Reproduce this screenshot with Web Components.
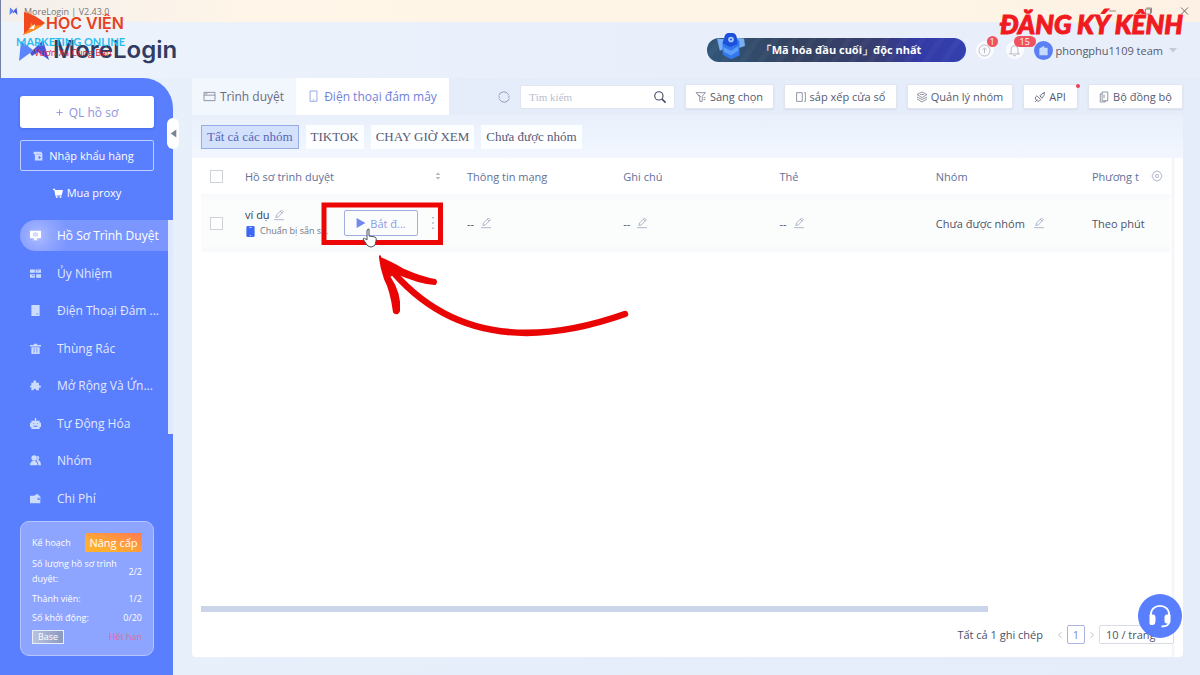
<!DOCTYPE html>
<html lang="vi">
<head>
<meta charset="utf-8">
<title>MoreLogin</title>
<style>
html, body { margin: 0; }
body { font-family: "Open Sans", "Noto Sans", sans-serif; font-size: 11px; color: #4a5068; background: #e7eefb; }
</style>
</head>
<body>
<ml-app></ml-app>
<script>
const define = (name, html, setup) => {
  const tpl = document.createElement('template');
  tpl.innerHTML = html;
  customElements.define(name, class extends HTMLElement {
    constructor() {
      super();
      this.attachShadow({ mode: 'open' }).append(tpl.content.cloneNode(true));
    }
    connectedCallback() { if (setup) setup(this, this.shadowRoot); }
  });
};

const icons = {
  mark: '<path d="M0 16 1 1l7 6-1 3z" fill="#5b86fb" stroke="none"/><path d="M7 10 14 1l2 15-6-6-3 3z" fill="#4a55d8" stroke="none"/>',
  plus: '<path d="M8 1v14M1 8h14" stroke-width="2"/>',
  box: '<path d="M1 1h12l2 3v11H3V5H1z" fill="#cfdcff" stroke="none"/><path d="M5 5h8" stroke="#7f9aff"/><path d="m9 8 4 2-4 3z" fill="#4a6cf0" stroke="none"/>',
  cart: '<path d="M0 1h3l1 2h12l-2 8H6v1h8v1H4L2 3H0z" fill="currentColor" stroke="none"/><circle cx="6" cy="14.500" r="1.500" fill="currentColor" stroke="none"/><circle cx="12" cy="14.500" r="1.500" fill="currentColor" stroke="none"/>',
  monitor: '<path d="M0 1h16v11h-6v2h2v1H4v-1h2v-2H0z" fill="#fff" stroke="none"/><path d="M5 4v5M7 4h2v5H7zM11 4v5" stroke="#a9bbff"/>',
  server: '<path d="M0 2h7v5H0zM8 2h8v5H8zM0 9h7v5H0zM9 9h7v5H9z" fill="currentColor" stroke="none"/><path d="M10 4h3M3 11h3" stroke="#597efe"/>',
  phone: '<path d="M2 0h12v16H2z" fill="currentColor" stroke="none"/><path d="M9 13h3" stroke="#597efe"/>',
  trash: '<path d="M0 3h5l1-2h4l1 2h5v2H0zM2 6h12v10H2z" fill="currentColor" stroke="none"/><path d="M6 7v7M10 7v7" stroke="#597efe"/>',
  puzzle: '<path d="M2 4h3c-1-5 5-5 4 0h4v4c4-1 4 4 0 3v4H9c0-3-4-3-4 0H2v-4C-1 11-1 7 2 8z" fill="currentColor" stroke="none"/>',
  robot: '<path d="M7 0h2v4h5v3h2v6h-2v3H2v-3H0V7h2V4h5z" fill="currentColor" stroke="none"/><path d="M5 8h1M10 8h1M5 12h6" stroke="#597efe" stroke-width="1.500"/>',
  users: '<circle cx="6" cy="4.500" r="4" fill="currentColor" stroke="none"/><path d="M0 15c0-9 11-9 11 0zM10 1c5 0 4 6 1 6 3 1 5 3 5 8h-4c0-4-1-6-3-7 2-2 2-4 1-7z" fill="currentColor" stroke="none"/>',
  wallet: '<path d="M0 4h6l5-3 2 3h2v3h-4v3h4v5H0z" fill="currentColor" stroke="none"/><path d="M12 8h4v1h-4z" fill="currentColor" stroke="none"/>',
  browser: '<path d="M0 2h16v12H0zM0 6h16M2 4h3"/>',
  tablet: '<path d="M3 0h10v15H3zM7 13h2"/>',
  refresh: '<path d="M1 6a7 7 0 0 1 13-1M15 10A7 7 0 0 1 2 11M14.500 6v3M1.500 7v3"/>',
  search: '<circle cx="6.500" cy="6.500" r="5.500" stroke-width="1.500"/><path d="m10.500 10.500 5 5" stroke-width="2"/>',
  filter: '<path d="M0 1h15l-5 6v8H6V8zM12 9h3M12 12h3M4 4l4 4"/>',
  panes: '<path d="M1 1h9v14H1zM13 1h2v14h-2"/>',
  layers: '<path d="m8 0 8 4-8 5-8-5zM0 8l8 4 8-4M0 11l8 5 8-5M5 4h6"/>',
  api: '<path d="M0 16l4-4m-1-6 6 6c-2 4-5 3-7 1s-2-5 1-7zm5 0 3-3c3-2 6-1 3 3l-3 4zm4-3 4-3M8 8l2-2" stroke-width="1.300"/>',
  copy: '<path d="M5 0h9v14H5zM5 3H2v13h8v-2M8 4v6"/>',
  pencil: '<path d="m3 12 1-4 8-8 3 3-8 8zM0 15.500h16M10 2l3 3"/>',
  device: '<rect x="2" width="12" height="16" rx="2" fill="#3f67f5" stroke="none"/><path d="M6 2h4M7 14h2" stroke="#fff"/>',
  play: '<path d="m1 0 14 8-14 8z" fill="#7288ee" stroke="none"/>',
  dots: '<g fill="#8088a8" stroke="none"><circle cx="8" cy="1" r="1"/><circle cx="8" cy="8" r="1"/><circle cx="8" cy="15" r="1"/></g>',
  sort: '<path d="m3 6 5-5 5 5zM3 10l5 5 5-5z" fill="#b4b8c6" stroke="none"/>',
  gear: '<path d="M8 0 13 2l3 6-3 6-5 2-5-2-3-6 3-6z"/><circle cx="8" cy="8" r="2.500"/>',
  up: '<circle cx="8" cy="8" r="8"/><path d="M8 12V5M5 7l3-3 3 3"/>',
  bell: '<path d="M0 13h16M3 13V7c0-8 10-8 10 0v6M6 15.500h4"/>',
  building: '<path d="m2 5 7-4v14H2zM9 4h5v11H9z" fill="#c6dcff" stroke="none"/>',
  caret: '<path d="M0 4h16l-8 9z" fill="#c3cad9" stroke="none"/>',
  fold: '<path d="M13 1v14L3 8z" fill="#7b8496" stroke="none"/>',
  left: '<path d="m12 1-8 7 8 7" stroke-width="2"/>', right: '<path d="m4 1 8 7-8 7" stroke-width="2"/>',
  min: '<path d="M1 8h14" stroke-width="1.500"/>', max: '<path d="M4 2h10v10M2 4h10v10H2z" stroke-width="1.500"/>', close: '<path d="m1 1 14 14M15 1 1 15" stroke-width="2"/>',
  headset: '<path d="M2 8C1-1 15-1 14 8" stroke-width="1.300"/><path d="M1 7h2c2 0 2 1 2 3s0 4-2 4H2c-1 0-1-1-1-2zM15 7h-2c-2 0-2 1-2 3s0 3 2 3h1c1 0 1-1 1-2z" fill="#fff" stroke="none"/><path d="M14 12c0 2-2 3-5 3" stroke-width="1.200"/>'
};

define('ml-icon', `<style>
:host { display: inline-flex; flex: none; width: 12px; height: 12px; }
svg { width: 100%; height: 100%; overflow: visible; fill: none; stroke: currentColor; stroke-width: 1; }
</style><svg viewBox="0 0 16 16" aria-hidden="true"></svg>`,
(el, root) => { root.querySelector('svg').innerHTML = icons[el.getAttribute('name')]; });

define('ml-titlebar', `<style>
:host { display: flex; align-items: center; gap: 6px; height: 22px; padding: 0 11px 0 8px; background: linear-gradient(90deg, #f3efec, #fff5e8 20%, #fef5e6 80%, #fdf0e4); color: #777; font-size: 9px; }
span { flex: 1; }
ml-icon { width: 9px; height: 8px; }
.win { display: flex; gap: 27px; color: #6d6a68; }
button { all: unset; display: flex; }
</style><ml-icon name="mark"></ml-icon><span>MoreLogin | V2.43.0</span>
<div class="win"><button aria-label="Thu nhỏ"><ml-icon name="min"></ml-icon></button><button aria-label="Phóng to"><ml-icon name="max"></ml-icon></button><button aria-label="Đóng"><ml-icon name="close"></ml-icon></button></div>`);

define('ml-banner', `<style>
:host { display: flex; align-items: center; justify-content: center; box-sizing: border-box; width: 259px; height: 24px; border-radius: 12px; padding-left: 10px; position: relative; color: #fff; font-size: 11px; font-weight: 700; background: repeating-linear-gradient(125deg, transparent 0 9px, #ffffff08 10px 15px), linear-gradient(90deg, #315578, #34425f 35%, #373d70 65%, #323aa5 82%, #3440b0); }
svg { position: absolute; left: 8px; top: -5px; width: 32px; height: 28px; }
</style><svg viewBox="0 0 32 30" aria-hidden="true"><path d="M1 6l10 1 2 9-9 3z" fill="#77aef5"/><path d="m20 5 10 1 1 8-9 3z" fill="#79aef3"/><path d="M9 5c0-7 13-7 13 0l3 4v15l-9 4-9-5V10z" fill="#3278ed"/><path d="M9 5c0-7 13-7 13 0l1 7-8 3-8-4z" fill="#1b4fdc"/><path d="m8 15 8 4 8-5v5l-8 5-8-4z" fill="#5b9df8"/><circle cx="16" cy="7" r="3" fill="#a8ceff"/><circle cx="16" cy="7" r="1" fill="#1744ca"/></svg><slot></slot>`);

define('ml-bubble', `<style>
:host { display: block; position: relative; width: 18px; height: 18px; border-radius: 50%; background: #f9fbff; color: #a0a2ae; }
button { all: unset; display: grid; place-items: center; width: 18px; height: 18px; }
ml-icon { width: 11px; height: 11px; }
span { position: absolute; left: 11px; bottom: 12px; min-width: 5px; height: 11px; padding: 0 3px; border-radius: 6px; background: #f05260; color: #fff; font-size: 9px; line-height: 11px; text-align: center; }
:host([wide]) span { left: 8px; padding: 0 6px; }
</style><button><ml-icon></ml-icon></button><span><slot></slot></span>`,
(el, root) => {
  root.querySelector('button').setAttribute('aria-label', el.getAttribute('label'));
  const ic = document.createElement('ml-icon');
  ic.setAttribute('name', el.getAttribute('icon'));
  root.querySelector('ml-icon').replaceWith(ic);
});

define('ml-header', `<style>
:host { display: flex; align-items: center; height: 56px; padding: 0 23px 0 18px; background: linear-gradient(90deg, #edf3fb, #e8effb 60%); }
h1 { display: flex; align-items: center; gap: 4px; flex: 1; margin: 0; font: 600 24px/28px Inter, sans-serif; color: #303c62; }
h1 ml-icon { width: 30px; height: 22px; }
.logo { width: 30px; height: 21px; }
.team { all: unset; display: flex; align-items: center; gap: 3px; color: #575a6c; }
.team i { display: grid; place-items: center; width: 19px; height: 19px; border-radius: 50%; background: #5b80f5; }
.team i ml-icon { width: 11px; height: 11px; }
.team .more { width: 8px; height: 8px; margin-left: 3px; }
.one { margin-left: 10px; } .two { margin: 0 10px 0 12px; }
</style><h1><svg class="logo" viewBox="0 0 30 21" aria-hidden="true"><path d="M0 21 2 1l12 9-3 3z" fill="#5b86fb"/><path d="m11 13 13-13 6 20-11-8-6 4z" fill="#4a55d8"/></svg>MoreLogin</h1>
<ml-banner>「Mã hóa đầu cuối」độc nhất</ml-banner>
<ml-bubble class="one" icon="up" label="Cập nhật">1</ml-bubble>
<ml-bubble class="two" icon="bell" label="Thông báo" wide>15</ml-bubble>
<button class="team"><i><ml-icon name="building"></ml-icon></i>phongphu1109 team<ml-icon class="more" name="caret"></ml-icon></button>`);

define('ml-nav-item', `<style>
:host { display: flex; align-items: center; }
a { flex: 1; display: flex; align-items: center; gap: 16px; height: 31px; padding-left: 10px; border-radius: 16px 0 0 16px; color: #e2e9ff; font-size: 12px; text-decoration: none; white-space: nowrap; }
:host([current]) a { color: #fff; font-weight: 500; background: radial-gradient(circle at 18px 50%, #adbcff 0, #91a6ff 14px, transparent 30px), #7b97ff; }
ml-icon { width: 11px; height: 11px; color: #ccdcff; }
</style><a href="#"><ml-icon></ml-icon><slot></slot></a>`,
(el, root) => {
  const ic = document.createElement('ml-icon'); ic.setAttribute('name', el.getAttribute('icon'));
  root.querySelector('ml-icon').replaceWith(ic);
  if (el.hasAttribute('current')) root.querySelector('a').setAttribute('aria-current', 'page');
});

define('ml-plan', `<style>
:host { display: flex; flex-direction: column; justify-content: space-between; box-sizing: border-box; height: 135px; padding: 11px; border: 1px solid #b4c5ff; border-radius: 9px; background: #8da5ff; color: #fff; font-size: 9px; }
div { display: flex; justify-content: space-between; align-items: center; line-height: 15px; }
button { all: unset; width: 57px; height: 19px; border-radius: 2px; background: linear-gradient(200deg, #ff7b52, #ffb02e 75%); font-size: 11px; font-weight: 500; text-align: center; line-height: 19px; }
b { box-sizing: border-box; width: 32px; height: 14px; border: 1px solid #e9eefc; background: linear-gradient(90deg, #b9c3df, #8b99bf); font-weight: 500; line-height: 12px; text-align: center; }
em { color: #df6c9d; font-style: normal; }
</style><div><span>Kế hoạch</span><button>Nâng cấp</button></div>
<div><span>Số lượng hồ sơ trình<br>duyệt:</span><span>2/2</span></div>
<div><span>Thành viên:</span><span>1/2</span></div>
<div><span>Số khởi động:</span><span>0/20</span></div>
<div><b>Base</b><em>Hết hạn</em></div>`);

define('ml-sidebar', `<style>
:host { position: relative; display: flex; flex-direction: column; box-sizing: border-box; width: 173px; padding: 18px 19px 19px 20px; border-radius: 0 30px 0 0; background: #597efe; color: #fff; }
.side { all: unset; display: flex; align-items: center; justify-content: center; gap: 6px; box-sizing: border-box; height: 31px; }
.new { height: 32px; border-radius: 3px; background: #fff; color: #8e94dd; font-size: 12px; box-shadow: 0 1px 3px #3457d080; }
.new ml-icon { width: 7px; height: 7px; }
.import { margin-top: 12px; border: 1px solid #c0ceff; border-radius: 2px; padding-right: 7px; }
.proxy { margin: 6px 0 9px; gap: 4px; }
.import ml-icon, .proxy ml-icon { width: 10px; height: 10px; }
nav { display: grid; grid-auto-rows: 1fr; height: 300px; margin: 0 -14px 4px 0; }
.bar { position: absolute; right: 0; top: 142px; width: 5px; height: 214px; background: #dfeaff; }
.fold { all: unset; position: absolute; right: -6px; top: 40px; display: grid; place-items: center; width: 12px; height: 31px; border-radius: 6px; background: #fff; }
.fold ml-icon { width: 9px; height: 9px; }
</style><button class="side new"><ml-icon name="plus"></ml-icon>QL hồ sơ</button>
<button class="side import"><ml-icon name="box"></ml-icon>Nhập khẩu hàng</button>
<button class="side proxy"><ml-icon name="cart"></ml-icon>Mua proxy</button>
<nav>
<ml-nav-item icon="monitor" current>Hồ Sơ Trình Duyệt</ml-nav-item>
<ml-nav-item icon="server">Ủy Nhiệm</ml-nav-item>
<ml-nav-item icon="phone">Điện Thoại Đám ...</ml-nav-item>
<ml-nav-item icon="trash">Thùng Rác</ml-nav-item>
<ml-nav-item icon="puzzle">Mở Rộng Và Ứn...</ml-nav-item>
<ml-nav-item icon="robot">Tự Động Hóa</ml-nav-item>
<ml-nav-item icon="users">Nhóm</ml-nav-item>
<ml-nav-item icon="wallet">Chi Phí</ml-nav-item>
</nav><ml-plan></ml-plan><div class="bar"></div>
<button class="fold" aria-label="Thu gọn"><ml-icon name="fold"></ml-icon></button>`);

define('ml-tool', `<style>
:host { display: block; position: relative; }
button { all: unset; display: flex; align-items: center; justify-content: center; gap: 4px; box-sizing: border-box; width: 100%; height: 25px; border: 1px solid #e0e5f0; border-radius: 2px; background: #fff; color: #555a70; white-space: nowrap; box-shadow: 0 1px 2px #c5cfe080; }
ml-icon { width: 10px; height: 10px; }
:host([dot])::after { content: ""; position: absolute; right: -2px; top: 0; width: 4px; height: 4px; border-radius: 50%; background: #f23f58; }
</style><button><ml-icon></ml-icon><slot></slot></button>`,
(el, root) => {
  const ic = document.createElement('ml-icon'); ic.setAttribute('name', el.getAttribute('icon'));
  root.querySelector('ml-icon').replaceWith(ic);
});

define('ml-toolbar', `<style>
:host { display: flex; align-items: center; gap: 10px; height: 37px; background: #e6edfa; }
.tabs { display: flex; align-self: stretch; margin-right: auto; font-size: 12px; }
.tabs button { all: unset; display: flex; align-items: center; justify-content: center; gap: 5px; width: 104px; background: #f2f6fd; color: #686d80; }
.tabs .on { width: 153px; background: #fff; color: #7182da; }
.tabs ml-icon { width: 11px; height: 11px; }
.reload { all: unset; display: flex; color: #7a82a5; }
.search { display: flex; align-items: center; box-sizing: border-box; width: 155px; height: 24px; padding: 0 8px; border: 1px solid #e0e5f0; border-radius: 2px; background: #fff; color: #444b68; }
input { all: unset; flex: 1; min-width: 0; font: 11px "Liberation Serif", serif; }
input::placeholder { color: #bbc0d0; }
.a { width: 89px; } .b { width: 113px; } .c { width: 106px; } .d { width: 55px; } .e { width: 95px; }
</style><div class="tabs" role="tablist"><button role="tab"><ml-icon name="browser"></ml-icon>Trình duyệt</button><button role="tab" class="on" aria-selected="true"><ml-icon name="tablet"></ml-icon>Điện thoại đám mây</button></div>
<button class="reload" aria-label="Tải lại"><ml-icon name="refresh"></ml-icon></button>
<label class="search"><input placeholder="Tìm kiếm" aria-label="Tìm kiếm"><ml-icon name="search"></ml-icon></label>
<ml-tool class="a" icon="filter">Sàng chọn</ml-tool><ml-tool class="b" icon="panes">sắp xếp cửa sổ</ml-tool>
<ml-tool class="c" icon="layers">Quản lý nhóm</ml-tool><ml-tool class="d" icon="api" dot>API</ml-tool>
<ml-tool class="e" icon="copy">Bộ đồng bộ</ml-tool>`);

define('ml-groups', `<style>
:host { display: flex; align-items: center; gap: 7px; height: 43px; padding-left: 9px; background: linear-gradient(#e9f0fb, #f2f7ff); }
button { all: unset; box-sizing: border-box; height: 24px; padding: 0 5px; background: #fdfeff; color: #555b78; font: 13px/24px "Liberation Serif", serif; white-space: nowrap; }
.on { border: 1px solid #98abe4; background: #d3e1fc; color: #5267b8; line-height: 22px; }
</style><button class="on">Tất cả các nhóm</button><button>TIKTOK</button><button>CHAY GIỜ XEM</button><button>Chưa được nhóm</button>`);

define('ml-profiles', `<style>
:host { display: flex; flex-direction: column; flex: 1; padding: 0 13px 0 9px; border-radius: 0 0 4px 4px; background: linear-gradient(90deg, transparent calc(100% - 12px), #eff2f8 calc(100% - 10px), #fff calc(100% - 8px)) #fff; }
table { width: 100%; table-layout: fixed; border-collapse: collapse; }
th, td { padding: 0; text-align: left; white-space: nowrap; }
th { height: 36px; color: #62709a; font-weight: 400; }
td { height: 58px; color: #4d5266; }
tbody tr { background: linear-gradient(#f6f8fa, #fbfdfd 8px, #fbfdfd 50px, #f7f9fa); }
.check { width: 44px; } .name { width: 222px; } .type { width: 78px; }
input { appearance: none; display: block; box-sizing: border-box; width: 13px; height: 13px; margin: 0 0 0 9px; border: 1px solid #cfd2d8; background: #fff; }
.row { display: flex; align-items: center; }
.between { justify-content: space-between; }
.cell { gap: 7px; }
.wide { gap: 9px; }
ml-icon { width: 10px; height: 10px; color: #838bae; }
.sort { width: 8px; margin-right: 25px; }
.gear { margin-right: 8px; }
.info { width: 82px; margin-right: 17px; line-height: 16px; }
.title { gap: 4px; color: #343950; font-weight: 500; }
.status { gap: 4px; font-size: 9px; color: #727788; }
.status ml-icon { width: 11px; height: 11px; }
.run { all: unset; display: flex; align-items: center; justify-content: center; gap: 4px; box-sizing: border-box; width: 74px; height: 26px; border: 1px solid #a3addf; border-radius: 2px; color: #8c9ae6; }
.more { all: unset; display: flex; margin-left: 9px; }
.more ml-icon { height: 12px; width: 12px; }
.fill { flex: 1; }
.scroll { width: 787px; max-width: 82%; height: 6px; background: #cad5ea; }
.pages { display: flex; align-items: center; justify-content: flex-end; gap: 4px; margin: 13px -4px 13px 0; height: 19px; }
.pages span { margin-right: 10px; }
.pages button { all: unset; display: flex; }
.pages button ml-icon { width: 6px; color: #a9aebd; }
.pages .num { display: grid; place-items: center; box-sizing: border-box; width: 18px; height: 19px; border: 1px solid #aab3e3; border-radius: 2px; color: #7888dd; }
select { appearance: none; box-sizing: border-box; width: 75px; height: 19px; padding: 0 6px; border: 1px solid #d9dce6; border-radius: 2px; background: #fff; color: #4d5266; font: inherit; }
</style>
<table><thead><tr><th class="check"><input type="checkbox" aria-label="Chọn tất cả"></th>
<th class="name"><div class="row between">Hồ sơ trình duyệt<ml-icon class="sort" name="sort"></ml-icon></div></th>
<th>Thông tin mạng</th><th>Ghi chú</th><th>Thẻ</th><th>Nhóm</th>
<th class="type"><div class="row between">Phương t<ml-icon class="gear" name="gear"></ml-icon></div></th></tr></thead>
<tbody><tr><td><input type="checkbox" aria-label="Chọn ví dụ"></td>
<td><div class="row"><div class="info"><div class="row title">ví dụ<ml-icon name="pencil"></ml-icon></div><div class="row status"><ml-icon name="device"></ml-icon>Chuẩn bị sẵn s...</div></div><button class="run"><ml-icon name="play"></ml-icon>Bắt đ...</button><button class="more" aria-label="Thêm"><ml-icon name="dots"></ml-icon></button></div></td>
<td><div class="row cell">--<ml-icon name="pencil"></ml-icon></div></td>
<td><div class="row cell">--<ml-icon name="pencil"></ml-icon></div></td>
<td><div class="row cell">--<ml-icon name="pencil"></ml-icon></div></td>
<td><div class="row wide">Chưa được nhóm<ml-icon name="pencil"></ml-icon></div></td><td>Theo phút</td></tr></tbody></table>
<div class="fill"></div><div class="scroll"></div>
<div class="pages"><span>Tất cả 1 ghi chép</span><button aria-label="Trang trước"><ml-icon name="left"></ml-icon></button><button class="num">1</button><button aria-label="Trang sau"><ml-icon name="right"></ml-icon></button><select aria-label="Số dòng"><option>10 / trang</option></select></div>`);

define('ml-academy', `<style>
:host { position: absolute; left: 15px; top: 10px; width: 112px; color: #e8401c; white-space: nowrap; }
.brand { display: flex; align-items: center; height: 26px; padding-left: 6px; font: 600 16px/26px Inter, sans-serif; }
svg { width: 24px; height: 26px; flex: none; }
.sub { height: 11px; font: 700 11px/11px Lato, sans-serif; color: #2bbcf0; }
.slogan { padding-left: 18px; font: 9px/11px "Open Sans", sans-serif; color: #dc2030; }
</style><div class="brand"><svg viewBox="0 0 24 26" aria-hidden="true"><path d="M2 2q10 2 21 11Q15 20 2 24z" fill="#f2481f"/><path d="M1 24Q9 20 9 12q1 6 13 2-8 7-21 11z" fill="#ff8a1f"/><path d="m7 19 6-5-1 5z" fill="#fff"/></svg>HỌC VIỆN</div><div class="sub">MARKETING ONLINE</div><div class="slogan">Vươn Xa Cùng Bạn</div>`);

define('ml-subscribe', `<style>
:host { position: absolute; right: 17px; top: 10px; color: #f11a20; font: italic 900 26px/28px Lato, sans-serif; white-space: nowrap; -webkit-text-stroke: 1px #f11a20; }
</style><slot></slot>`);

define('ml-pointer', `<style>
:host { position: absolute; left: 320px; top: 202px; width: 310px; height: 140px; pointer-events: none; }
svg { width: 100%; height: 100%; }
</style><svg viewBox="321 202 310 140" fill="none" aria-hidden="true">
<path d="M324 205h116.500v37.500H324z" stroke="#ec0606" stroke-width="5"/>
<path d="M367 240v-9q0-2 2-2v7l6 1q2 1 1 4l-1 4q-4 4-8 0l-4-6q1-2 4 1" fill="#fff" stroke="#4b4e5e"/>
<path d="M388 266C430 318 500 358 625 314" stroke="#ea0505" stroke-width="6.500" stroke-linecap="round"/>
<path d="M380 258q10 4 24 12 18 8 31 10 2 2 0 4-16-1-38-11l-8 3q12 18 10 35-2 4-5 1-3-22-9-33-4-11-5-21 0-3 0-1z" fill="#ea0505" stroke="#ea0505" stroke-width="2" stroke-linejoin="round"/></svg>`);

define('ml-support', `<style>
:host { position: absolute; right: 18px; bottom: 37px; }
button { all: unset; display: grid; place-items: center; width: 44px; height: 44px; border-radius: 50%; background: #597efe; color: #fff; }
ml-icon { width: 24px; height: 24px; }
</style><button aria-label="Hỗ trợ"><ml-icon name="headset"></ml-icon></button>`);

define('ml-app', `<style>
:host { position: relative; display: flex; flex-direction: column; box-sizing: border-box; min-height: 100vh; border-left: 1px solid #7380a4; border-bottom: 1px solid #7c8089; background: linear-gradient(90deg, #e8f0fc, #e6edfa 90%); }
main { display: flex; flex: 1; }
section { flex: 1; display: flex; flex-direction: column; min-width: 0; margin: 0 17px 18px 19px; }
ml-sidebar { margin-left: -1px; }
</style><ml-titlebar></ml-titlebar><ml-header></ml-header>
<main><ml-sidebar></ml-sidebar><section><ml-toolbar></ml-toolbar><ml-groups></ml-groups><ml-profiles></ml-profiles></section></main>
<ml-support></ml-support><ml-academy></ml-academy><ml-subscribe>ĐĂNG KÝ KÊNH</ml-subscribe><ml-pointer></ml-pointer>`);
</script>
</body>
</html>
